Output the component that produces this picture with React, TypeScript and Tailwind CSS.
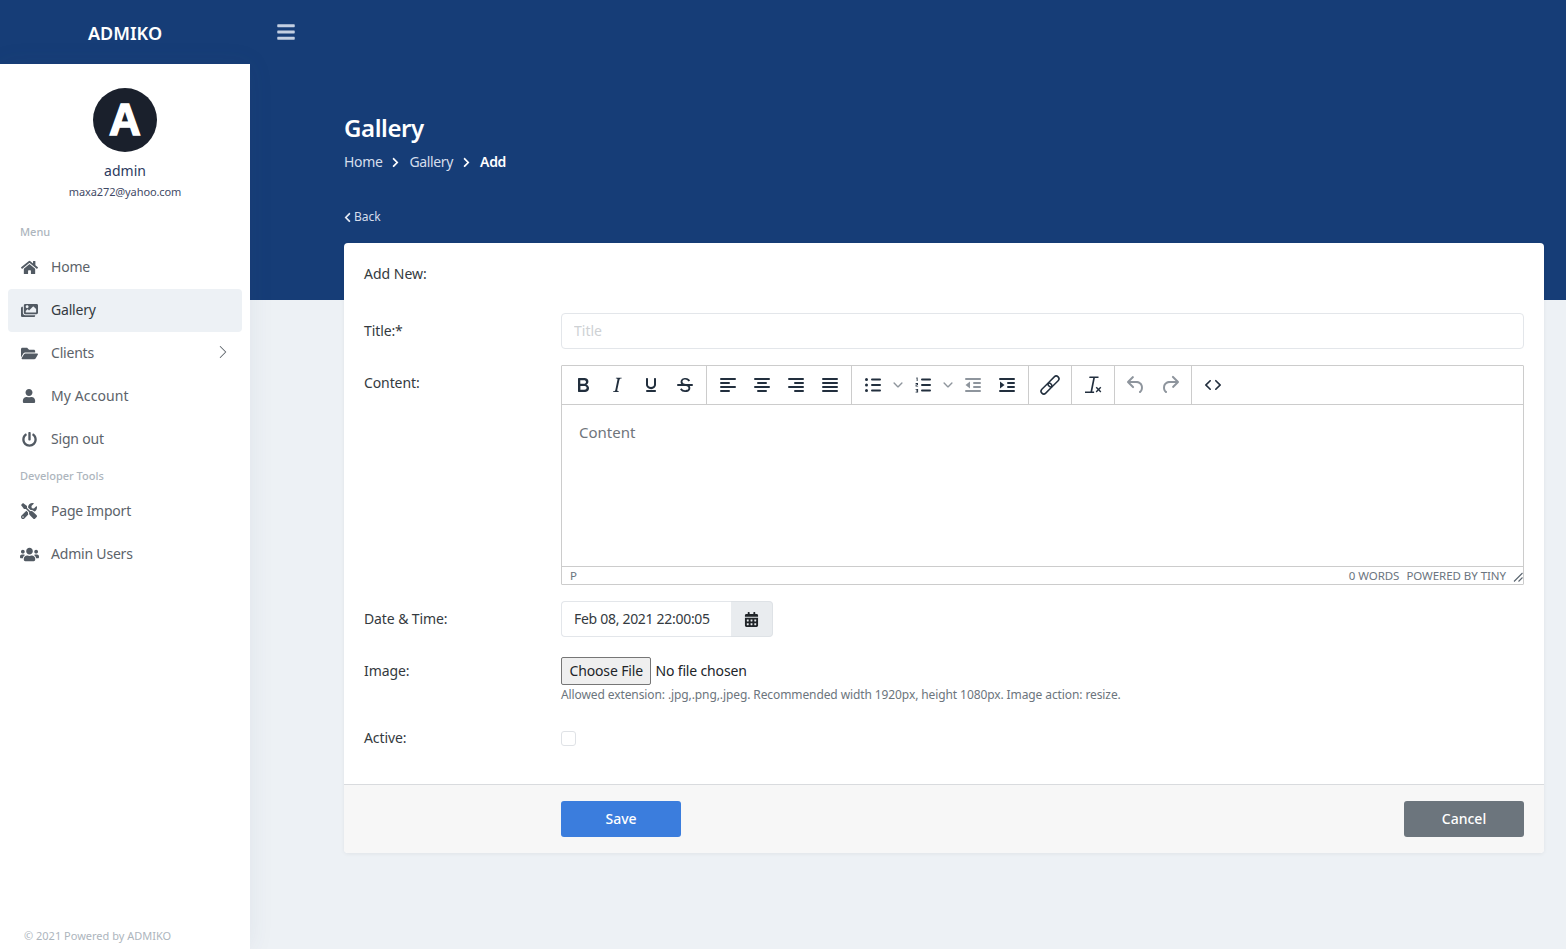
import React from "react";
import { FaHome, FaImages, FaFolderOpen, FaUser, FaPowerOff, FaTools, FaUsers, FaBars, FaCalendarAlt, FaChevronLeft, FaChevronRight } from "react-icons/fa";
import { ChevronRight } from "lucide-react";

const Ic = ({ children, color = "#222f3e" }: { children: React.ReactNode; color?: string }) => (
  <svg width="24" height="24" viewBox="0 0 24 24" fill={color}>{children}</svg>
);

const Btn = ({ children }: { children: React.ReactNode }) => (
  <div className="w-[34px] h-[34px] flex items-center justify-center">{children}</div>
);

const Chev = () => (
  <div className="w-4 h-[34px] flex items-center justify-center">
    <svg width="10" height="10" viewBox="0 0 10 10" fill="#222f3e" opacity="0.5">
      <path d="M5 7.6a.7.7 0 0 1-.5-.2L.6 3.6a.7.7 0 0 1 1-1L5 5.9l3.400-3.300a.7.7 0 0 1 1 1L5.500 7.400a.7.7 0 0 1-.5.2z" />
    </svg>
  </div>
);

const Group = ({ children, last }: { children: React.ReactNode; last?: boolean }) => (
  <div className={"flex px-1 items-center h-[38px] " + (last ? "" : "border-r border-[#cccccc]")}>{children}</div>
);

const Lines = ({ rows }: { rows: [number, number][] }) => (
  <Ic>
    {rows.map(([x, w], i) => (
      <rect key={i} x={x} y={5 + i * 4} width={w} height="2" rx="1" />
    ))}
  </Ic>
);

const NavItem = ({ icon, label, active, chevron, wide }: { icon: React.ReactNode; label: string; active?: boolean; chevron?: boolean; wide?: boolean }) => (
  <div className={"mx-2 h-[43px] flex items-center rounded pl-[11px] pr-3 " + (active ? "bg-[#edf1f5] text-[#343a40]" : "text-[#5c636a]")}>
    <div className="w-5 flex justify-center text-[#525a63] shrink-0 pb-[1px]">{icon}</div>
    <span className={"ml-3 text-[14px] flex-1 pb-[2px] " + (wide ? "tracking-[0.1px]" : "tracking-[-0.2px]")}>{label}</span>
    {chevron && <ChevronRight size={22} strokeWidth={1.1} className="mb-[3px] -mr-1" />}
  </div>
);

const Label = ({ children, className = "" }: { children: React.ReactNode; className?: string }) => (
  <div className={"w-[197px] shrink-0 text-[14px] tracking-[-0.1px] text-[#343a40] " + className}>{children}</div>
);

export default function App() {
  return (
    <div className="flex h-screen overflow-hidden bg-[#edf1f5] font-['Noto_Sans',sans-serif]">
      <aside className="w-[250px] shrink-0 flex flex-col relative">
        <div className="h-16 bg-[#163d77] flex items-center justify-center text-white text-[18px] font-semibold pt-[3px]">ADMIKO</div>
        <div className="flex-1 bg-white shadow-[0_0_24px_rgba(60,80,120,0.08)] flex flex-col">
          <div className="flex flex-col items-center pt-6">
            <div className="w-16 h-16 rounded-full bg-[#1a202c] flex items-center justify-center text-white text-[44px] font-black leading-none font-['Liberation_Sans',sans-serif] [-webkit-text-stroke:1.5px_white]">A</div>
            <div className="mt-[9px] text-[14px] leading-[20px] text-[#2b3a5e]">admin</div>
            <div className="mt-[3px] text-[11px] leading-[16px] tracking-[-0.1px] text-[#3f4a66]">maxa272@yahoo.com</div>
          </div>
          <div className="mt-[24px] pl-5 text-[11px] leading-[16px] font-medium text-[#adb5bd]">Menu</div>
          <div className="mt-[6px]">
            <NavItem icon={<FaHome size={17} />} label="Home" />
            <NavItem icon={<FaImages size={17} />} label="Gallery" active />
            <NavItem icon={<FaFolderOpen size={17} />} label="Clients" chevron />
            <NavItem icon={<FaUser size={14} />} label="My Account" wide />
            <NavItem icon={<FaPowerOff size={15} />} label="Sign out" />
          </div>
          <div className="mt-[7px] pl-5 text-[11px] leading-[16px] font-medium text-[#adb5bd]">Developer Tools</div>
          <div className="mt-[6px]">
            <NavItem icon={<FaTools size={16} />} label="Page Import" />
            <NavItem icon={<FaUsers size={19} />} label="Admin Users" />
          </div>
          <div className="mt-auto pl-6 pb-[5px] text-[11px] leading-[16px] text-[#adb5bd]">© 2021 Powered by ADMIKO</div>
        </div>
      </aside>

      <main className="flex-1 min-w-0">
        <div className="h-[300px] bg-[#163d77]">
          <div className="h-16 flex items-center pl-[26px] text-[#c3cfe2]">
            <FaBars size={20} />
          </div>
          <div className="pl-[94px] pt-[48px]">
            <h1 className="text-[24px] leading-[32px] font-semibold tracking-[-0.4px] text-white">Gallery</h1>
            <div className="mt-[8px] flex items-center text-[14px] leading-[20px] tracking-[-0.35px] text-[#d5deec]">
              <span>Home</span>
              <FaChevronRight size={11} className="mx-2 text-white" />
              <span>Gallery</span>
              <FaChevronRight size={11} className="mx-2 text-white" />
              <span className="font-semibold text-white">Add</span>
            </div>
            <div className="mt-[36px] flex items-center text-[12px] leading-[18px] text-[#d5deec]">
              <FaChevronLeft size={11} className="-ml-[2px] mr-[1px] text-[#e4e9f2]" />
              <span>Back</span>
            </div>
          </div>
        </div>

        <div className="-mt-[57px] ml-[94px] w-[1200px] bg-white rounded shadow-[0_1px_4px_rgba(0,0,0,0.06)] relative">
          <div className="px-5 pt-5 pb-[34px]">
            <div className="text-[14px] leading-[21px] text-[#343a40]">Add New:</div>

            <div className="flex items-center mt-[29px]">
              <Label className="pb-[2px]">Title:*</Label>
              <input placeholder="Title" className="w-[963px] h-9 border border-[#e3e6ea] rounded px-3 pb-[2px] text-[14px] outline-none placeholder:text-[#ced1d4]" />
            </div>

            <div className="flex mt-4">
              <Label className="pt-[7px]">Content:</Label>
              <div className="w-[963px] h-[220px] border border-[#cccccc] rounded-[1px] flex flex-col">
                <div className="h-[39px] flex border-b border-[#cccccc] shrink-0">
                  <Group>
                    <Btn><Ic><path d="M7.800 19c-.3 0-.5 0-.6-.2l-.2-.5V5.700c0-.2 0-.4.2-.5l.6-.2h5c1.500 0 2.700.3 3.500 1 .7.6 1.100 1.400 1.100 2.500a3 3 0 0 1-.6 1.900c-.4.6-1 1-1.600 1.200.4.1.9.3 1.300.6s.8.7 1 1.200c.4.4.5 1 .5 1.600 0 1.300-.4 2.300-1.300 3-.8.7-2 1-3.500 1H7.800zm5-8.300c.6 0 1.200-.1 1.600-.5.4-.3.6-.7.6-1.300 0-1.100-.8-1.700-2.300-1.700H9.300v3.500h3.500zm.5 6c.7 0 1.300-.1 1.700-.4.4-.4.6-.9.6-1.500s-.2-1-.7-1.400c-.4-.3-1-.4-2-.4H9.400v3.700h3.900z" /></Ic></Btn>
                    <Btn><Ic><path d="M16.700 4.700l-.1.900h-.3c-.6 0-1 0-1.400.3-.3.3-.4.6-.5 1.100l-2.100 9.800v.6c0 .5.4.8 1.400.8h.2l-.2.8H8l.2-.8h.2c1.100 0 1.800-.5 2-1.500l2-9.800.1-.5c0-.6-.4-.8-1.400-.8h-.3l.2-.9h5.400z" /></Ic></Btn>
                    <Btn><Ic><path d="M16 5c.6 0 1 .4 1 1v5.500a4 4 0 0 1-.4 1.800l-1 1.400a5.300 5.300 0 0 1-5.500 1 5 5 0 0 1-1.600-1c-.5-.4-.8-.9-1.100-1.400a4 4 0 0 1-.4-1.800V6c0-.6.4-1 1-1s1 .4 1 1v5.500c0 .3 0 .6.2 1l.6.7a3.300 3.300 0 0 0 2.200.8 3.400 3.400 0 0 0 2.200-.8c.3-.2.4-.5.6-.8l.2-.9V6c0-.6.4-1 1-1zM8 17h8c.6 0 1 .4 1 1s-.4 1-1 1H8a1 1 0 0 1 0-2z" /></Ic></Btn>
                    <Btn><Ic><path d="M15.600 8.500c-.5-.7-1-1.100-1.300-1.300-.6-.4-1.300-.6-2-.6-2.700 0-2.800 1.700-2.800 2.100 0 1.600 1.800 2 3.200 2.300 4.400.9 4.600 2.800 4.600 3.900 0 1.400-.7 4.100-5 4.100A6.200 6.200 0 0 1 7 16.400l1.500-1.100c.4.6 1.600 2 3.700 2 1.600 0 2.500-.4 3-1.200.4-.8.3-2-.8-2.600-.7-.4-1.600-.7-2.900-1-1-.2-3.900-.8-3.900-3.600C7.600 6 10.300 5 12.400 5c2.900 0 4.200 1.600 4.700 2.400l-1.500 1.100z" /><rect x="4" y="11" width="16" height="2" rx="1" /></Ic></Btn>
                  </Group>
                  <Group>
                    <Btn><Lines rows={[[4, 16], [4, 10], [4, 16], [4, 10]]} /></Btn>
                    <Btn><Lines rows={[[4, 16], [7, 10], [4, 16], [7, 10]]} /></Btn>
                    <Btn><Lines rows={[[4, 16], [10, 10], [4, 16], [10, 10]]} /></Btn>
                    <Btn><Lines rows={[[4, 16], [4, 16], [4, 16], [4, 16]]} /></Btn>
                  </Group>
                  <Group>
                    <Btn><Ic><circle cx="5.500" cy="6.500" r="1.500" /><circle cx="5.500" cy="12" r="1.500" /><circle cx="5.500" cy="17.500" r="1.500" /><rect x="10" y="5.500" width="10" height="2" rx="1" /><rect x="10" y="11" width="10" height="2" rx="1" /><rect x="10" y="16.500" width="10" height="2" rx="1" /></Ic></Btn>
                    <Chev />
                    <Btn><Ic><rect x="10" y="5.500" width="10" height="2" rx="1" /><rect x="10" y="11" width="10" height="2" rx="1" /><rect x="10" y="16.500" width="10" height="2" rx="1" /><path d="M5.500 4.500h1.100v3.500h-.9V5.400h-.5z" /><path d="M4.600 10.100h2.400v2h-1.500v.6H7.100v.8H4.600v-2h1.500v-.6H4.600z" /><path d="M4.600 16h2.500v3.500H4.600v-.8h1.600v-.5H5v-.7h1.200v-.7H4.600z" /></Ic></Btn>
                    <Chev />
                    <Btn><Ic color="#8e959d"><rect x="4" y="5" width="16" height="2" rx="1" /><rect x="12" y="9" width="8" height="2" rx="1" /><rect x="12" y="13" width="8" height="2" rx="1" /><rect x="4" y="17" width="16" height="2" rx="1" /><path d="M9 8.500v7L4.500 12z" /></Ic></Btn>
                    <Btn><Ic><rect x="4" y="5" width="16" height="2" rx="1" /><rect x="12" y="9" width="8" height="2" rx="1" /><rect x="12" y="13" width="8" height="2" rx="1" /><rect x="4" y="17" width="16" height="2" rx="1" /><path d="M5 8.500v7L9.500 12z" /></Ic></Btn>
                  </Group>
                  <Group>
                    <Btn><Ic><g fill="none" stroke="#222f3e" strokeWidth="1.500" transform="rotate(-45 12 12)"><rect x="0.500" y="9.250" width="13" height="5.500" rx="2.750" /><rect x="10.500" y="9.250" width="13" height="5.500" rx="2.750" /></g></Ic></Btn>
                  </Group>
                  <Group>
                    <Btn><Ic><path d="M8.500 3.500h9v1.600h-3.600l-2.700 13.300h1.900V20H4v-1.600h5.500L12.200 5.100H8.200z" /><path d="M14.700 14.800l1-1 1.800 1.800 1.800-1.800 1 1-1.800 1.800 1.800 1.800-1 1-1.800-1.800-1.800 1.800-1-1 1.800-1.800z" /></Ic></Btn>
                  </Group>
                  <Group>
                    <Btn><Ic color="#8e959d"><path d="M6.400 8H12c3.700 0 6.200 2 6.800 5.100.6 2.700-.4 5.600-2.300 6.800a1 1 0 0 1-1-1.800c1.100-.6 1.800-2.700 1.400-4.600-.5-2.100-2.100-3.500-4.900-3.500H6.400l3.300 3.300a1 1 0 1 1-1.400 1.400l-5-5a1 1 0 0 1 0-1.400l5-5a1 1 0 0 1 1.400 1.400L6.400 8z" /></Ic></Btn>
                    <Btn><Ic color="#8e959d"><path d="M17.600 10H12c-2.800 0-4.400 1.400-4.900 3.500-.4 2 .3 4 1.400 4.600a1 1 0 1 1-1 1.800c-2-1.200-2.900-4.100-2.300-6.800.6-3 3-5.100 6.800-5.100h5.600l-3.300-3.300a1 1 0 1 1 1.400-1.400l5 5a1 1 0 0 1 0 1.400l-5 5a1 1 0 0 1-1.400-1.400l3.300-3.300z" /></Ic></Btn>
                  </Group>
                  <Group last>
                    <Btn><Ic><path d="M9.800 15.700c.3.3.3.8 0 1-.3.4-.9.4-1.200 0l-4.400-4.100a.8.8 0 0 1 0-1.200l4.400-4.200c.3-.3.9-.3 1.200 0 .3.3.3.8 0 1.100L6 12l3.800 3.700zm4.400 0c-.3.3-.3.800 0 1 .3.4.9.4 1.200 0l4.400-4.100c.3-.3.3-.9 0-1.200l-4.400-4.200a.8.8 0 0 0-1.200 0c-.3.3-.3.8 0 1.100L18 12l-3.800 3.700z" /></Ic></Btn>
                  </Group>
                </div>
                <div className="flex-1 pl-[17px] pt-4 text-[15px] leading-[22px] text-[#6f757b]">Content</div>
                <div className="h-[18px] shrink-0 border-t border-[#cccccc] flex items-center justify-between pl-[8px] text-[11.500px] leading-none tracking-[-0.05px] text-[#6b7580]">
                  <span>P</span>
                  <div className="flex items-center">
                    <span>0 WORDS</span>
                    <span className="ml-[7px]">POWERED BY TINY</span>
                    <svg width="10" height="10" viewBox="0 0 10 10" className="ml-[7px] mt-[3px]" stroke="#5b6570" strokeWidth="1.100" fill="none"><path d="M1 9.500L9.500 1M5.500 9.500L9.500 5.500" /></svg>
                  </div>
                </div>
              </div>
            </div>

            <div className="flex items-center mt-4">
              <Label className="pb-[2px]">Date &amp; Time:</Label>
              <div className="flex h-9 w-[212px]">
                <div className="w-[170px] border border-r-0 border-[#e3e6ea] rounded-l flex items-center pl-3 pb-[2px] text-[14px] tracking-[-0.3px] text-[#343a40]">Feb 08, 2021 22:00:05</div>
                <div className="w-[42px] bg-[#e9ecef] border border-l-0 border-[#dee2e6] rounded-r flex items-center justify-center text-[#212529]">
                  <FaCalendarAlt size={15} />
                </div>
              </div>
            </div>

            <div className="flex mt-5">
              <Label className="pt-[3px]">Image:</Label>
              <div>
                <input
                  type="file"
                  className="block h-7 text-[14px] tracking-[-0.15px] text-[#212529] file:h-7 file:px-[7.5px] file:pb-[2px] file:mr-[4px] file:border file:border-solid file:border-[#767676] file:rounded-[2px] file:bg-[#efefef] file:text-[#212529]"
                />
                <div className="mt-[1px] text-[12px] leading-[18px] tracking-[-0.1px] text-[#6c757d]">Allowed extension: .jpg,.png,.jpeg. Recommended width 1920px, height 1080px. Image action: resize.</div>
              </div>
            </div>

            <div className="flex items-center mt-[23px]">
              <Label className="pb-[2px]">Active:</Label>
              <div className="w-[15px] h-[15px] border border-[#dfe2e6] rounded-[3px] bg-white" />
            </div>
          </div>

          <div className="h-[69px] border-t border-[#d9dbde] bg-[#f7f7f7] rounded-b flex items-center pl-[217px] pr-5 justify-between">
            <button className="w-[120px] h-9 rounded-[3px] bg-[#3b7ddd] text-white text-[14px] font-medium pb-[2px]">Save</button>
            <button className="w-[120px] h-9 rounded-[3px] bg-[#6c757d] text-white text-[14px] font-medium pb-[2px]">Cancel</button>
          </div>
        </div>
      </main>
    </div>
  );
}
